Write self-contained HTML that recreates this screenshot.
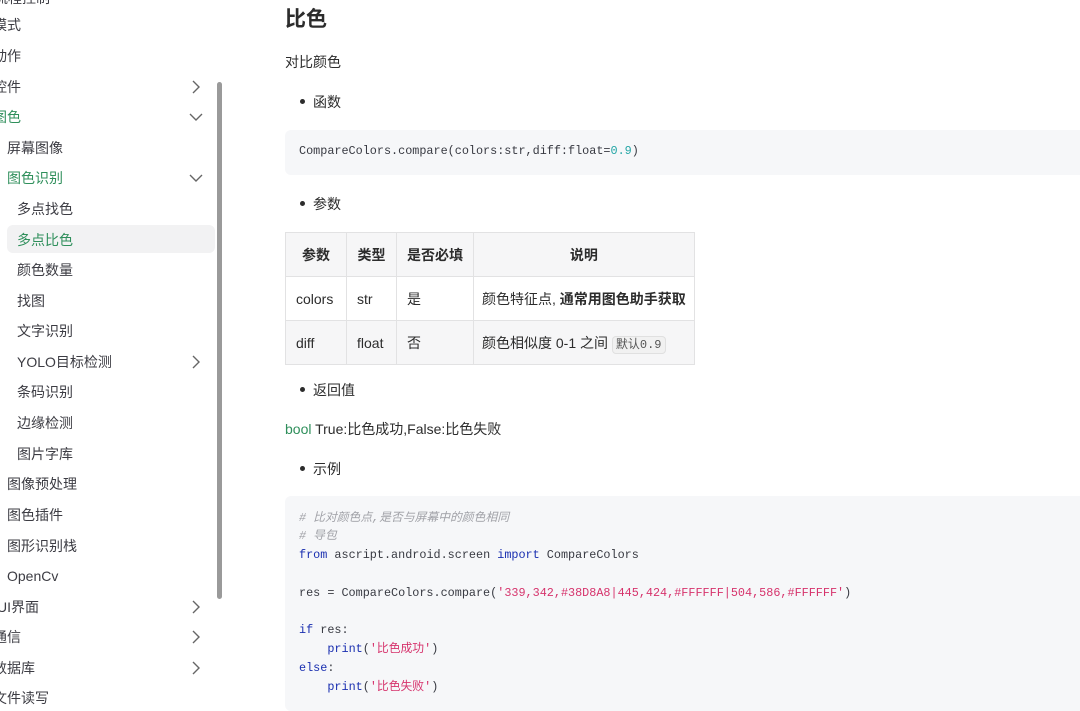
<!DOCTYPE html>
<html><head><meta charset="utf-8"><style>
*{margin:0;padding:0;box-sizing:border-box}
body{width:1080px;height:705px;overflow:hidden;background:#fff;font-family:"Liberation Sans","Noto Sans CJK SC",sans-serif;color:#2c2c2c;position:relative}
.s{position:absolute;font-size:14px;color:#3c3c43;line-height:20px;white-space:nowrap}
.g{color:#2f8f5b}
.chev{position:absolute;width:14px;height:14px}
.sb{position:absolute;left:217px;top:82px;width:5px;height:517px;background:#9a9a9a;border-radius:3px}
.t{position:absolute;white-space:nowrap}
.code{position:absolute;left:285px;background:#f6f7f9;border-radius:6px;font-family:"Liberation Mono","Noto Sans CJK SC",monospace;font-size:11.8px;color:#383a42}
.code div{position:absolute;left:14px;white-space:pre;line-height:19px}
.kw{color:#1a2fb0}.str{color:#d6336c}.cm{color:#a0a1a7;font-style:italic}.num{color:#22a5a5}
table{position:absolute;left:285px;top:232px;border-collapse:collapse;font-size:14px}
td,th{border:1px solid #e2e2e3;padding:0 10px;height:44px;text-align:left;white-space:nowrap}
th{background:#f6f6f7;font-weight:bold;text-align:center}
tr.alt td{background:#f6f6f7}
.ic{background:#f1f1f1;border:1px solid #e0e0e0;border-radius:4px;font-family:"Liberation Mono","Noto Sans CJK SC",monospace;font-size:12px;padding:1px 3px;color:#555}
.dot{position:absolute;width:5px;height:5px;border-radius:50%;background:#2c2c2c}
</style></head><body>
<div class="s" style="left:-6px;top:-12px">流程控制</div>
<div class="s" style="left:-7px;top:15px">模式</div>
<div class="s" style="left:-7px;top:46px">动作</div>
<div class="s" style="left:-7px;top:77px">控件</div>
<div class="s g" style="left:-7px;top:107px">图色</div>
<div class="s" style="left:7px;top:138px">屏幕图像</div>
<div class="s g" style="left:7px;top:168px">图色识别</div>
<div style="position:absolute;left:7px;top:225px;width:208px;height:28px;background:#f2f2f3;border-radius:6px"></div>
<div class="s" style="left:17px;top:199px">多点找色</div>
<div class="s g" style="left:17px;top:230px">多点比色</div>
<div class="s" style="left:17px;top:260px">颜色数量</div>
<div class="s" style="left:17px;top:291px">找图</div>
<div class="s" style="left:17px;top:321px">文字识别</div>
<div class="s" style="left:17px;top:352px">YOLO目标检测</div>
<div class="s" style="left:17px;top:382px">条码识别</div>
<div class="s" style="left:17px;top:413px">边缘检测</div>
<div class="s" style="left:17px;top:444px">图片字库</div>
<div class="s" style="left:7px;top:474px">图像预处理</div>
<div class="s" style="left:7px;top:505px">图色插件</div>
<div class="s" style="left:7px;top:536px">图形识别栈</div>
<div class="s" style="left:7px;top:566px">OpenCv</div>
<div class="s" style="left:-3px;top:597px">UI界面</div>
<div class="s" style="left:-7px;top:627px">通信</div>
<div class="s" style="left:-7px;top:658px">数据库</div>
<div class="s" style="left:-7px;top:688px">文件读写</div>
<svg class="chev" style="left:189px;top:80px" viewBox="0 0 14 14"><path d="M4 1l6 6-6 6" fill="none" stroke="#666" stroke-width="1.4"/></svg>
<svg class="chev" style="left:189px;top:110px" viewBox="0 0 14 14"><path d="M1 4l6 6 6-6" fill="none" stroke="#666" stroke-width="1.4"/></svg>
<svg class="chev" style="left:189px;top:171px" viewBox="0 0 14 14"><path d="M1 4l6 6 6-6" fill="none" stroke="#666" stroke-width="1.4"/></svg>
<svg class="chev" style="left:189px;top:355px" viewBox="0 0 14 14"><path d="M4 1l6 6-6 6" fill="none" stroke="#666" stroke-width="1.4"/></svg>
<svg class="chev" style="left:189px;top:600px" viewBox="0 0 14 14"><path d="M4 1l6 6-6 6" fill="none" stroke="#666" stroke-width="1.4"/></svg>
<svg class="chev" style="left:189px;top:630px" viewBox="0 0 14 14"><path d="M4 1l6 6-6 6" fill="none" stroke="#666" stroke-width="1.4"/></svg>
<svg class="chev" style="left:189px;top:661px" viewBox="0 0 14 14"><path d="M4 1l6 6-6 6" fill="none" stroke="#666" stroke-width="1.4"/></svg>
<div class="sb"></div>

<div class="t" style="left:285px;top:6px;font-size:21px;font-weight:bold;line-height:28px">比色</div>
<div class="t" style="left:285px;top:52px;font-size:14px;line-height:20px">对比颜色</div>
<div class="dot" style="left:300px;top:99px"></div><div class="t" style="left:313px;top:92px;font-size:14px;line-height:20px">函数</div>
<div class="code" style="top:130px;width:800px;height:45px"><div style="top:12px">CompareColors.compare(colors:str,diff:float=<span class="num">0.9</span>)</div></div>
<div class="dot" style="left:300px;top:201px"></div><div class="t" style="left:313px;top:194px;font-size:14px;line-height:20px">参数</div>
<table>
<tr><th style="width:61px">参数</th><th style="width:50px">类型</th><th style="width:76px">是否必填</th><th style="width:211px">说明</th></tr>
<tr><td>colors</td><td>str</td><td>是</td><td style="padding:0 8px">颜色特征点, <b>通常用图色助手获取</b></td></tr>
<tr class="alt"><td>diff</td><td>float</td><td>否</td><td style="padding:0 8px">颜色相似度 0-1 之间 <span class="ic">默认0.9</span></td></tr>
</table>
<div class="dot" style="left:300px;top:387px"></div><div class="t" style="left:313px;top:380px;font-size:14px;line-height:20px">返回值</div>
<div class="t" style="left:285px;top:419px;font-size:14px;line-height:20px"><span class="g">bool</span> True:比色成功,False:比色失败</div>
<div class="dot" style="left:300px;top:466px"></div><div class="t" style="left:313px;top:459px;font-size:14px;line-height:20px">示例</div>
<div class="code" style="top:496px;width:800px;height:215px">
<div style="top:13px" class="cm"># 比对颜色点,是否与屏幕中的颜色相同</div>
<div style="top:31px" class="cm"># 导包</div>
<div style="top:50px"><span class="kw">from</span> ascript.android.screen <span class="kw">import</span> CompareColors</div>
<div style="top:88px">res = CompareColors.compare(<span class="str">'339,342,#38D8A8|445,424,#FFFFFF|504,586,#FFFFFF'</span>)</div>
<div style="top:125px"><span class="kw">if</span> res:</div>
<div style="top:144px">    <span class="kw">print</span>(<span class="str">'比色成功'</span>)</div>
<div style="top:163px"><span class="kw">else</span>:</div>
<div style="top:182px">    <span class="kw">print</span>(<span class="str">'比色失败'</span>)</div>
</div>
</body></html>
